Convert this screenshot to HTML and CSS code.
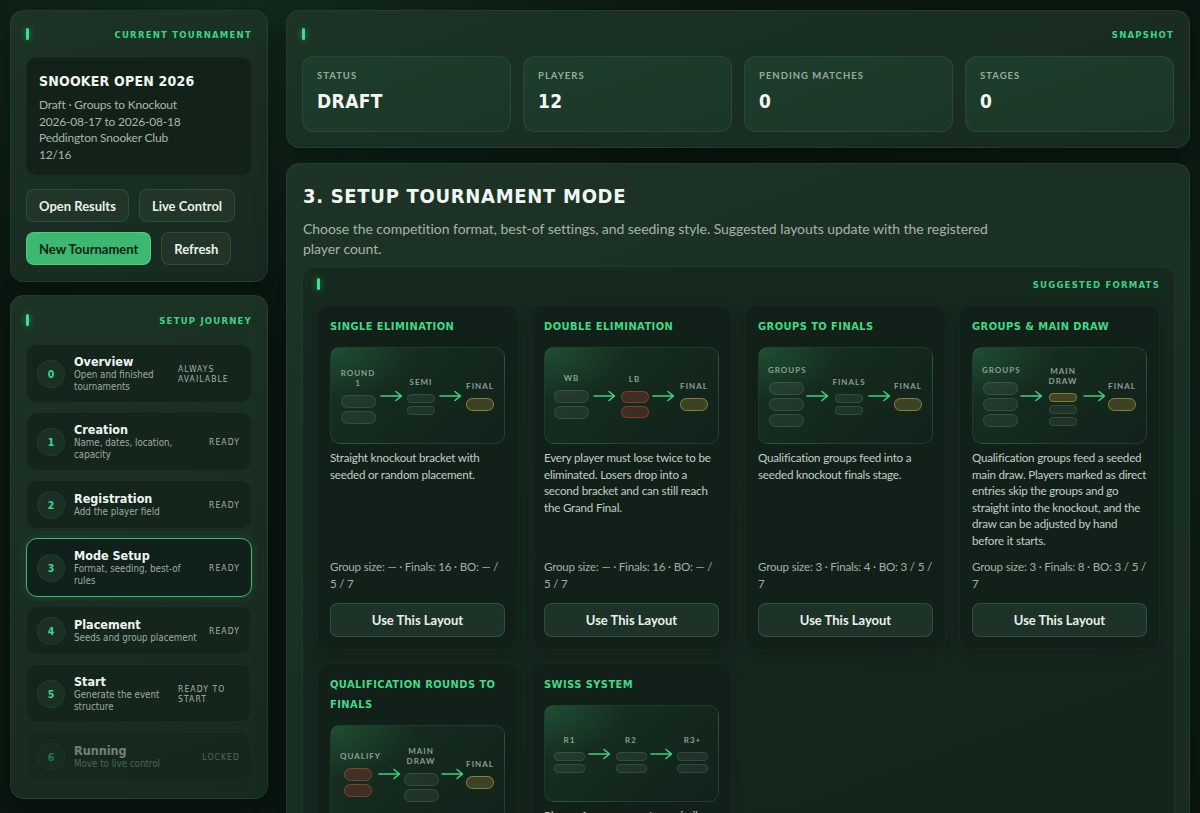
FILE: index.html
```html
<!DOCTYPE html>
<html lang="en">
<head>
<meta charset="utf-8">
<title>Snooker Open 2026 – Setup</title>
<link rel="stylesheet" href="styles.css">
</head>
<body>
<div class="app">
  <aside class="sidebar">
    <section class="panel current">
      <header class="panel-head"><span class="tick"></span><span class="eyebrow">Current Tournament</span></header>
      <div class="info-card">
        <h2 class="info-title">Snooker Open 2026</h2>
        <p>Draft · Groups to Knockout</p>
        <p>2026-08-17 to 2026-08-18</p>
        <p>Peddington Snooker Club</p>
        <p>12/16</p>
      </div>
      <div class="btn-row first">
        <button class="btn">Open Results</button>
        <button class="btn">Live Control</button>
      </div>
      <div class="btn-row">
        <button class="btn btn-primary">New Tournament</button>
        <button class="btn">Refresh</button>
      </div>
    </section>

    <section class="panel journey">
      <header class="panel-head"><span class="tick"></span><span class="eyebrow">Setup Journey</span></header>
      <ol class="steps">
        <li class="step">
          <span class="step-num">0</span>
          <div class="step-text"><span class="step-title">Overview</span><span class="step-sub">Open and finished tournaments</span></div>
          <span class="step-status">Always available</span>
        </li>
        <li class="step">
          <span class="step-num">1</span>
          <div class="step-text"><span class="step-title">Creation</span><span class="step-sub">Name, dates, location, capacity</span></div>
          <span class="step-status">Ready</span>
        </li>
        <li class="step">
          <span class="step-num">2</span>
          <div class="step-text"><span class="step-title">Registration</span><span class="step-sub">Add the player field</span></div>
          <span class="step-status">Ready</span>
        </li>
        <li class="step active">
          <span class="step-num">3</span>
          <div class="step-text"><span class="step-title">Mode Setup</span><span class="step-sub">Format, seeding, best-of rules</span></div>
          <span class="step-status">Ready</span>
        </li>
        <li class="step">
          <span class="step-num">4</span>
          <div class="step-text"><span class="step-title">Placement</span><span class="step-sub">Seeds and group placement</span></div>
          <span class="step-status">Ready</span>
        </li>
        <li class="step">
          <span class="step-num">5</span>
          <div class="step-text"><span class="step-title">Start</span><span class="step-sub">Generate the event structure</span></div>
          <span class="step-status">Ready to start</span>
        </li>
        <li class="step locked">
          <span class="step-num">6</span>
          <div class="step-text"><span class="step-title">Running</span><span class="step-sub">Move to live control</span></div>
          <span class="step-status">Locked</span>
        </li>
      </ol>
    </section>
  </aside>

  <main class="content">
    <section class="panel snapshot">
      <header class="panel-head"><span class="tick"></span><span class="eyebrow">Snapshot</span></header>
      <div class="stats">
        <div class="stat"><span class="stat-label">Status</span><span class="stat-value">Draft</span></div>
        <div class="stat"><span class="stat-label">Players</span><span class="stat-value">12</span></div>
        <div class="stat"><span class="stat-label">Pending Matches</span><span class="stat-value">0</span></div>
        <div class="stat"><span class="stat-label">Stages</span><span class="stat-value">0</span></div>
      </div>
    </section>

    <section class="panel mode">
      <h1 class="mode-title">3. Setup Tournament Mode</h1>
      <p class="lead">Choose the competition format, best-of settings, and seeding style. Suggested layouts update with the registered player count.</p>

      <section class="subpanel">
        <header class="panel-head"><span class="tick"></span><span class="eyebrow">Suggested Formats</span></header>
        <div class="formats">

          <article class="format">
            <h3 class="format-title">Single Elimination</h3>
            <div class="diagram">
              <div class="col"><span class="col-label">Round 1</span><span class="pill lg"></span><span class="pill lg"></span></div>
              <svg class="arrow" viewBox="0 0 24 12"><path d="M1 6H21M16 1.5L21.5 6L16 10.5"/></svg>
              <div class="col"><span class="col-label">Semi</span><span class="pill sm"></span><span class="pill sm"></span></div>
              <svg class="arrow" viewBox="0 0 24 12"><path d="M1 6H21M16 1.5L21.5 6L16 10.5"/></svg>
              <div class="col"><span class="col-label">Final</span><span class="pill fin gold"></span></div>
            </div>
            <p class="format-desc">Straight knockout bracket with seeded or random placement.</p>
            <p class="format-meta">Group size: — · Finals: 16 · BO: — / 5 / 7</p>
            <button class="btn btn-block">Use This Layout</button>
          </article>

          <article class="format">
            <h3 class="format-title">Double Elimination</h3>
            <div class="diagram">
              <div class="col"><span class="col-label">WB</span><span class="pill lg"></span><span class="pill lg"></span></div>
              <svg class="arrow" viewBox="0 0 24 12"><path d="M1 6H21M16 1.5L21.5 6L16 10.5"/></svg>
              <div class="col"><span class="col-label">LB</span><span class="pill md red"></span><span class="pill md red"></span></div>
              <svg class="arrow" viewBox="0 0 24 12"><path d="M1 6H21M16 1.5L21.5 6L16 10.5"/></svg>
              <div class="col"><span class="col-label">Final</span><span class="pill fin gold"></span></div>
            </div>
            <p class="format-desc">Every player must lose twice to be eliminated. Losers drop into a second bracket and can still reach the Grand Final.</p>
            <p class="format-meta">Group size: — · Finals: 16 · BO: — / 5 / 7</p>
            <button class="btn btn-block">Use This Layout</button>
          </article>

          <article class="format">
            <h3 class="format-title">Groups to Finals</h3>
            <div class="diagram">
              <div class="col"><span class="col-label">Groups</span><span class="pill lg"></span><span class="pill lg"></span><span class="pill lg"></span></div>
              <svg class="arrow" viewBox="0 0 24 12"><path d="M1 6H21M16 1.5L21.5 6L16 10.5"/></svg>
              <div class="col"><span class="col-label">Finals</span><span class="pill sm"></span><span class="pill sm"></span></div>
              <svg class="arrow" viewBox="0 0 24 12"><path d="M1 6H21M16 1.5L21.5 6L16 10.5"/></svg>
              <div class="col"><span class="col-label">Final</span><span class="pill fin gold"></span></div>
            </div>
            <p class="format-desc">Qualification groups feed into a seeded knockout finals stage.</p>
            <p class="format-meta">Group size: 3 · Finals: 4 · BO: 3 / 5 / 7</p>
            <button class="btn btn-block">Use This Layout</button>
          </article>

          <article class="format">
            <h3 class="format-title">Groups &amp; Main Draw</h3>
            <div class="diagram">
              <div class="col"><span class="col-label">Groups</span><span class="pill lg"></span><span class="pill lg"></span><span class="pill lg"></span></div>
              <svg class="arrow" viewBox="0 0 24 12"><path d="M1 6H21M16 1.5L21.5 6L16 10.5"/></svg>
              <div class="col"><span class="col-label">Main Draw</span><span class="pill sm gold"></span><span class="pill sm"></span><span class="pill sm"></span></div>
              <svg class="arrow" viewBox="0 0 24 12"><path d="M1 6H21M16 1.5L21.5 6L16 10.5"/></svg>
              <div class="col"><span class="col-label">Final</span><span class="pill fin gold"></span></div>
            </div>
            <p class="format-desc">Qualification groups feed a seeded main draw. Players marked as direct entries skip the groups and go straight into the knockout, and the draw can be adjusted by hand before it starts.</p>
            <p class="format-meta">Group size: 3 · Finals: 8 · BO: 3 / 5 / 7</p>
            <button class="btn btn-block">Use This Layout</button>
          </article>

          <article class="format">
            <h3 class="format-title">Qualification Rounds to Finals</h3>
            <div class="diagram">
              <div class="col"><span class="col-label">Qualify</span><span class="pill fin red"></span><span class="pill fin red"></span></div>
              <svg class="arrow" viewBox="0 0 24 12"><path d="M1 6H21M16 1.5L21.5 6L16 10.5"/></svg>
              <div class="col"><span class="col-label">Main Draw</span><span class="pill lg"></span><span class="pill lg"></span></div>
              <svg class="arrow" viewBox="0 0 24 12"><path d="M1 6H21M16 1.5L21.5 6L16 10.5"/></svg>
              <div class="col"><span class="col-label">Final</span><span class="pill fin gold"></span></div>
            </div>
            <p class="format-desc">Open qualification rounds narrow the field before the seeded main draw and the final.</p>
            <p class="format-meta">Group size: — · Finals: 8 · BO: 3 / 5 / 7</p>
            <button class="btn btn-block">Use This Layout</button>
          </article>

          <article class="format">
            <h3 class="format-title">Swiss System</h3>
            <div class="diagram">
              <div class="col"><span class="col-label">R1</span><span class="pill sw"></span><span class="pill sw"></span></div>
              <svg class="arrow" viewBox="0 0 24 12"><path d="M1 6H21M16 1.5L21.5 6L16 10.5"/></svg>
              <div class="col"><span class="col-label">R2</span><span class="pill sw"></span><span class="pill sw"></span></div>
              <svg class="arrow" viewBox="0 0 24 12"><path d="M1 6H21M16 1.5L21.5 6L16 10.5"/></svg>
              <div class="col"><span class="col-label">R3+</span><span class="pill sw"></span><span class="pill sw"></span></div>
            </div>
            <p class="format-desc">Players face opponents on similar scores each round, with no one eliminated early.</p>
            <p class="format-meta">Group size: — · Finals: — · BO: 3 / 5 / 7</p>
            <button class="btn btn-block">Use This Layout</button>
          </article>

        </div>
      </section>
    </section>
  </main>
</div>
</body>
</html>
```

FILE: styles.css
```css
* { box-sizing: border-box; }

html, body {
  margin: 0;
  background-color: #0b1711;
}

body {
  font-family: "Lato", "DejaVu Sans", sans-serif;
  color: #e6eee8;
  background-image:
    radial-gradient(ellipse 60% 50% at 20% 0%, rgba(30, 80, 50, 0.35), transparent 70%),
    radial-gradient(ellipse 50% 60% at 90% 40%, rgba(25, 70, 45, 0.25), transparent 70%);
  min-height: 100vh;
}

.app {
  display: flex;
  align-items: flex-start;
  gap: 18px;
  padding: 10px;
}

.sidebar {
  width: 258px;
  flex-shrink: 0;
  display: flex;
  flex-direction: column;
  gap: 13px;
}

.content {
  flex: 1;
  min-width: 0;
  display: flex;
  flex-direction: column;
  gap: 15px;
}

/* Panels */
.panel {
  background: linear-gradient(160deg, #1c3326 0%, #1a2f23 45%, #172a1f 100%);
  border: 1px solid rgba(120, 200, 150, 0.10);
  border-radius: 14px;
  box-shadow: 0 10px 30px rgba(0, 0, 0, 0.35);
}

.panel-head {
  display: flex;
  align-items: center;
  justify-content: space-between;
  height: 12px;
}

.tick {
  width: 3px;
  height: 12px;
  border-radius: 2px;
  background: #3fe08b;
  box-shadow: 0 0 6px rgba(63, 224, 139, 0.6);
}

.eyebrow,
.info-title,
.stat-value,
.mode-title,
.format-title,
.step-num {
  font-family: "DejaVu Sans Condensed", "DejaVu Sans", sans-serif;
  font-weight: 700;
  text-transform: uppercase;
}

.eyebrow {
  font-size: 9.5px;
  letter-spacing: 1.2px;
  color: #3fd282;
}

/* Current tournament */
.current {
  padding: 17px 15px 16px;
}

.current .panel-head { margin-bottom: 17px; }

.info-card {
  background: #122219;
  border: 1px solid rgba(255, 255, 255, 0.03);
  border-radius: 10px;
  padding: 13px 12px 12px;
}

.info-title {
  margin: 0 0 6px;
  font-size: 14px;
  line-height: 20px;
  letter-spacing: 0.2px;
  color: #f1f5f2;
}

.info-card p {
  margin: 0;
  font-size: 12px;
  line-height: 16.5px;
  letter-spacing: -0.2px;
  color: #a8b5ac;
}

.btn-row {
  display: flex;
  gap: 10px;
  margin-top: 10px;
}

.btn-row.first { margin-top: 13px; }

.btn {
  height: 33px;
  padding: 0 12px;
  border-radius: 8px;
  background: #213629;
  border: 1px solid rgba(150, 220, 180, 0.13);
  color: #e9f0eb;
  font-family: "Lato", "DejaVu Sans", sans-serif;
  font-size: 13px;
  font-weight: 700;
  cursor: pointer;
}

.btn-primary {
  background: #3cb870;
  border-color: rgba(120, 240, 170, 0.35);
  color: #0d2315;
}

/* Journey */
.journey {
  padding: 18px 15px 17px;
}

.journey .panel-head { margin-bottom: 18px; }

.steps {
  list-style: none;
  margin: 0;
  padding: 0;
  display: flex;
  flex-direction: column;
  gap: 9px;
}

.step {
  display: flex;
  align-items: center;
  gap: 9px;
  padding: 9.5px 11px 9.5px 10px;
  background: #14261c;
  border: 1px solid rgba(255, 255, 255, 0.04);
  border-radius: 11px;
}

.step.active {
  background: #10201a;
  border-color: #3cb873;
  box-shadow: 0 0 8px rgba(60, 184, 115, 0.18);
}

.step.locked { opacity: 0.42; }

.step-num {
  width: 28px;
  height: 28px;
  flex-shrink: 0;
  border-radius: 50%;
  background: #1a3024;
  border: 1px solid rgba(255, 255, 255, 0.05);
  display: grid;
  place-items: center;
  color: #45d486;
  font-size: 10.5px;
}

.step-text {
  flex: 1;
  min-width: 0;
  display: flex;
  flex-direction: column;
}

.step-title {
  font-family: "DejaVu Sans Condensed", "DejaVu Sans", sans-serif;
  font-weight: 700;
  font-size: 12.5px;
  line-height: 14px;
  color: #f0f4f1;
}

.step-sub {
  font-family: "DejaVu Sans Condensed", "DejaVu Sans", sans-serif;
  font-size: 9.7px;
  line-height: 12px;
  color: #9eaba2;
}

.step-status {
  flex-shrink: 0;
  max-width: 62px;
  font-family: "DejaVu Sans Condensed", "DejaVu Sans", sans-serif;
  font-size: 8.5px;
  line-height: 10px;
  letter-spacing: 1.1px;
  color: #a5b1a9;
  text-transform: uppercase;
}

/* Snapshot */
.snapshot {
  padding: 17px 15px 15px;
}

.snapshot .panel-head { margin-bottom: 16px; }

.stats {
  display: grid;
  grid-template-columns: repeat(4, 1fr);
  gap: 12px;
}

.stat {
  display: flex;
  flex-direction: column;
  padding: 13px 14px 16px;
  background: linear-gradient(160deg, #1e3d2b, #1b3627);
  border: 1px solid rgba(120, 200, 150, 0.12);
  border-radius: 12px;
}

.stat-label {
  font-size: 9.5px;
  line-height: 12px;
  font-weight: 700;
  letter-spacing: 1px;
  text-transform: uppercase;
  color: #98ab9f;
}

.stat-value {
  margin-top: 5px;
  font-size: 19px;
  line-height: 28px;
  letter-spacing: 0.4px;
  color: #f3f6f4;
}

/* Mode panel */
.mode {
  padding: 17px 14px 15px 15px;
}

.mode-title {
  margin: 0 0 0 1px;
  font-size: 20px;
  line-height: 30px;
  letter-spacing: 0.7px;
  color: #f2f6f3;
}

.lead {
  margin: 8px 0 0 1px;
  max-width: 700px;
  font-size: 14px;
  line-height: 20px;
  letter-spacing: -0.05px;
  color: #a6b4aa;
}

.subpanel {
  margin-top: 7px;
  padding: 11px 14px 14px;
  background: rgba(14, 30, 21, 0.35);
  border: 1px solid rgba(120, 200, 150, 0.10);
  border-radius: 12px;
}

.subpanel .panel-head { margin-bottom: 15px; }

.formats {
  display: grid;
  grid-template-columns: repeat(4, 1fr);
  gap: 13px;
}

.format {
  display: flex;
  flex-direction: column;
  padding: 11px 12px 12px;
  background: #11211a;
  border: 1px solid rgba(255, 255, 255, 0.03);
  border-radius: 12px;
  box-shadow: 0 6px 16px rgba(0, 0, 0, 0.18);
}

.format-title {
  margin: 0 0 10px;
  font-size: 11px;
  line-height: 20px;
  letter-spacing: 0.45px;
  color: #44d986;
}

.diagram {
  height: 97px;
  flex-shrink: 0;
  display: flex;
  align-items: center;
  justify-content: space-between;
  padding: 0 10px 0 9px;
  border: 1px solid rgba(110, 200, 140, 0.14);
  border-radius: 10px;
  background:
    radial-gradient(ellipse 70% 80% at 0% 0%, rgba(46, 140, 85, 0.33), transparent 70%),
    linear-gradient(135deg, #173021, #11221a);
}

.col {
  display: flex;
  flex-direction: column;
  align-items: center;
  gap: 3px;
}

.col-label {
  max-width: 36px;
  margin-bottom: 4px;
  text-align: center;
  font-size: 8px;
  line-height: 10px;
  font-weight: 700;
  letter-spacing: 1px;
  text-transform: uppercase;
  color: #8e9d93;
}

.pill {
  display: block;
  border-radius: 7px;
  background: rgba(255, 255, 255, 0.06);
  border: 1px solid rgba(160, 220, 180, 0.14);
}

.pill.lg { width: 35px; height: 13px; }
.pill.md { width: 28px; height: 12px; }
.pill.sm { width: 28px; height: 9px; }
.pill.fin { width: 28px; height: 13px; }
.pill.sw { width: 31px; height: 9px; }

.pill.gold {
  background: rgba(150, 130, 55, 0.32);
  border-color: rgba(200, 170, 70, 0.55);
}

.pill.red {
  background: rgba(130, 55, 38, 0.4);
  border-color: rgba(190, 80, 60, 0.5);
}

.arrow {
  width: 24px;
  height: 12px;
  flex-shrink: 0;
  fill: none;
  stroke: #3fcf80;
  stroke-width: 1.6;
  stroke-linecap: round;
  stroke-linejoin: round;
}

.format-desc {
  margin: 6px 0 0;
  font-size: 11.6px;
  line-height: 16.5px;
  letter-spacing: -0.2px;
  color: #c3cdc6;
}

.format-meta {
  margin: auto 0 0;
  padding-top: 10px;
  font-size: 11.6px;
  line-height: 16.5px;
  letter-spacing: -0.2px;
  color: #a2afa6;
}

.btn-block {
  margin-top: 11px;
  height: 34px;
  width: 100%;
  flex-shrink: 0;
  background: #1e3328;
  border-color: rgba(120, 200, 150, 0.2);
}
```
